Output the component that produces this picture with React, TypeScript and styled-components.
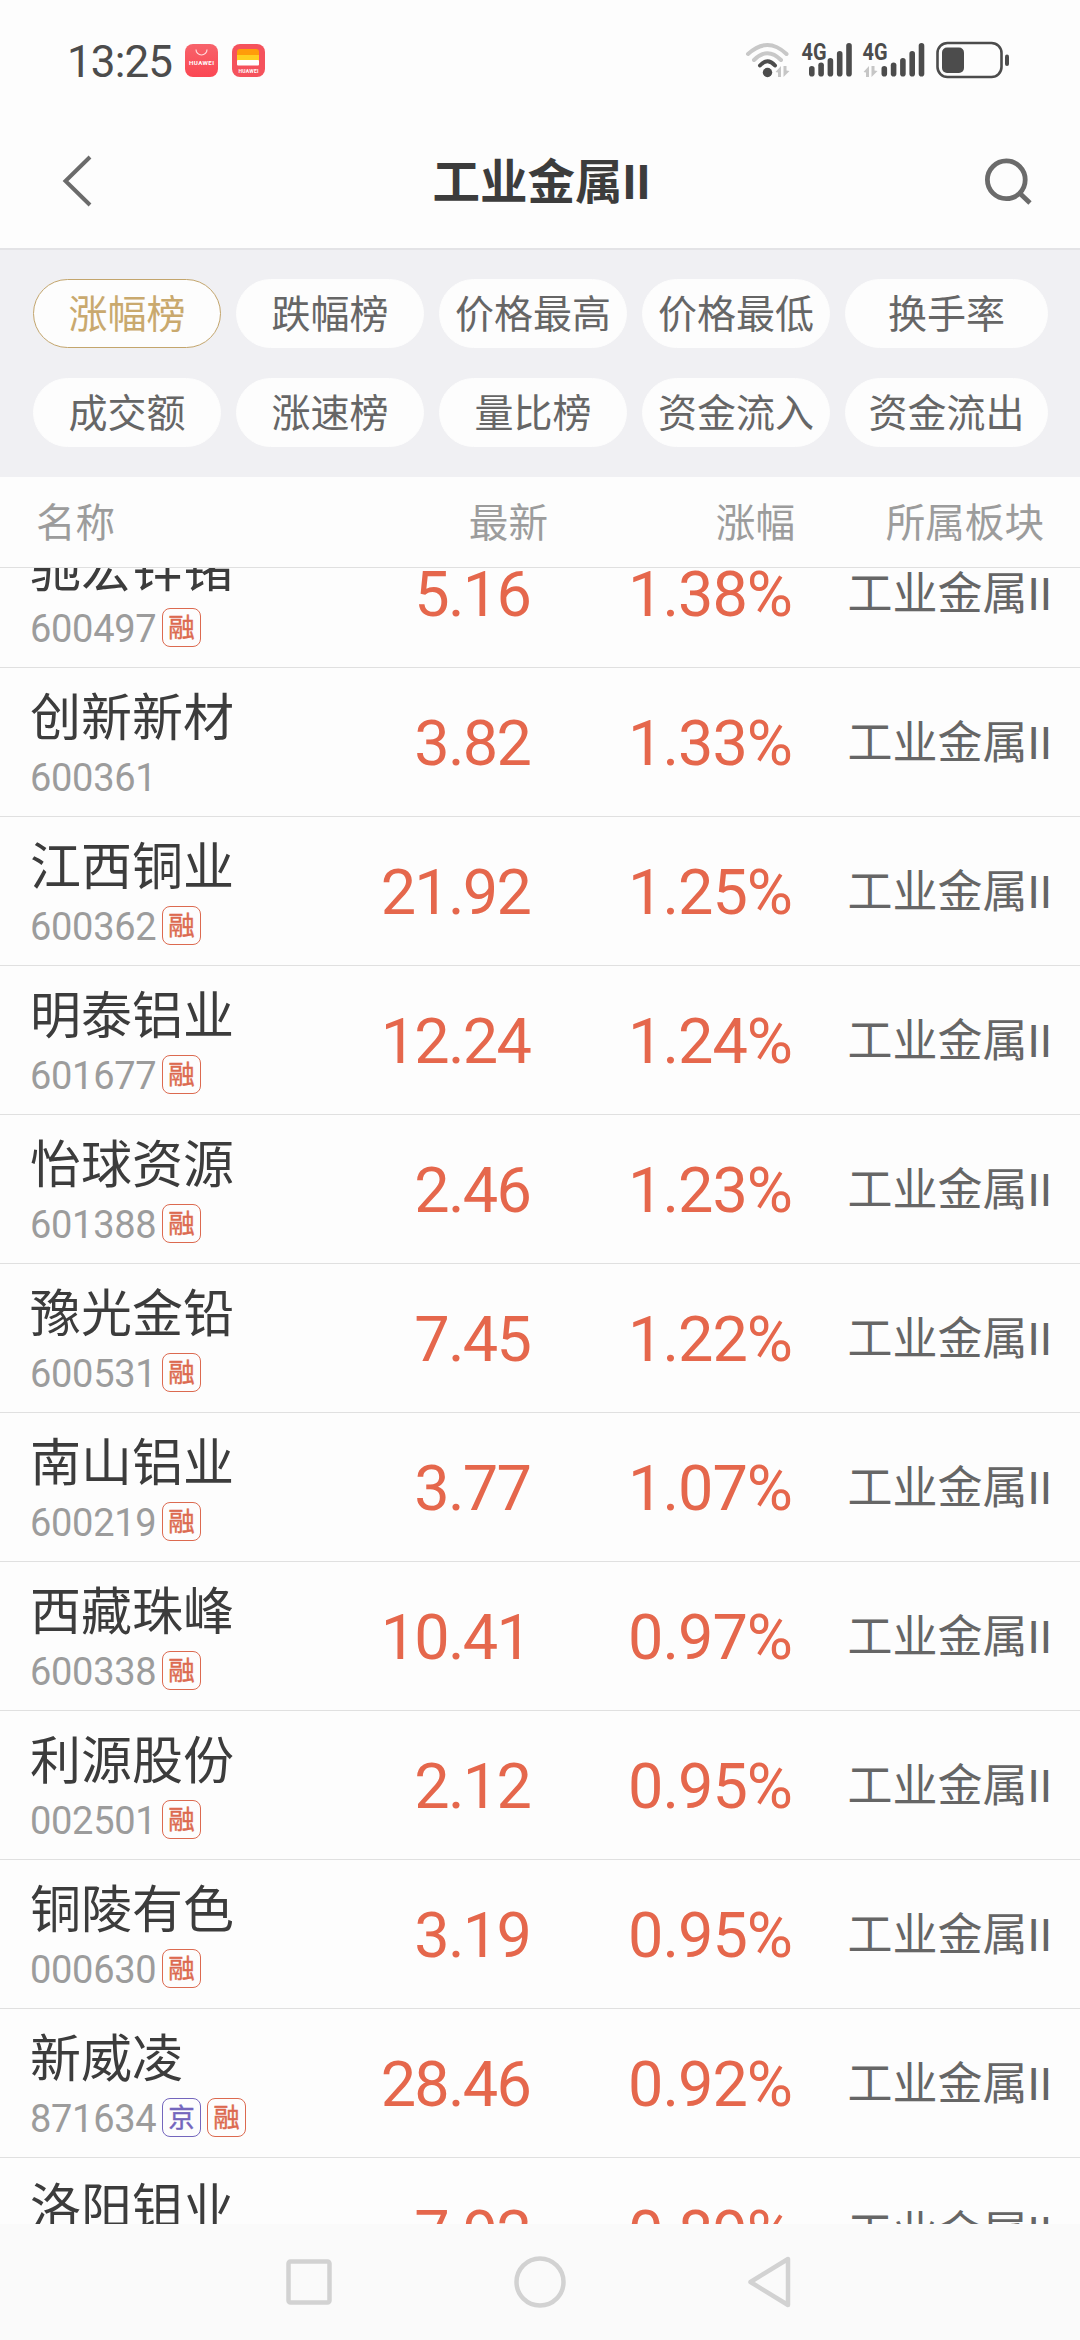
import React from "react";
import styled, { createGlobalStyle } from "styled-components";

const Global = createGlobalStyle`
  * { box-sizing: border-box; }
  html, body { margin: 0; background: #fdfdfd; }
  body { font-family: Roboto, "Noto Sans CJK SC", sans-serif; color: #3c3c3c; }
  svg { display: block; }
`;

const Screen = styled.div`
  width: 1080px;
  height: 2340px;
  display: flex;
  flex-direction: column;
  overflow: hidden;
  background: #fdfdfd;
`;

const StatusBar = styled.div`
  height: 120px;
  flex: none;
  display: flex;
  align-items: center;
  justify-content: space-between;
  padding: 0 70px 0 67px;
`;

const StatusGroup = styled.div<{ $gap: number }>`
  display: flex;
  align-items: center;
  gap: ${(p) => p.$gap}px;
`;

const Clock = styled.span`
  width: 105px;
  font-size: 44px;
  line-height: 52px;
  letter-spacing: -0.9px;
  color: #4c4c4c;
  padding-top: 3px;
`;

const Header = styled.header`
  height: 130px;
  flex: none;
  display: flex;
  align-items: center;
  justify-content: space-between;
  padding: 0 46px 6px 60px;
  border-bottom: 2px solid #e3e3e6;
`;

const Title = styled.h1`
  margin: 0;
  padding: 4px 0 0 3px;
  font-size: 47.5px;
  line-height: 60px;
  font-weight: 700;
`;

const Filters = styled.section`
  height: 227px;
  flex: none;
  display: grid;
  grid-template-columns: repeat(4, 188px) 203px;
  grid-template-rows: 69px 69px;
  column-gap: 15px;
  row-gap: 30px;
  padding: 29px 33px;
  background: #f0f0f3;
`;

const Pill = styled.button<{ $active?: boolean }>`
  display: flex;
  align-items: center;
  justify-content: center;
  padding: 2px 0 0;
  border: 1px solid ${(p) => (p.$active ? "#c3a56c" : "#fdfdfd")};
  border-radius: 35px;
  background: #fdfdfd;
  color: ${(p) => (p.$active ? "#c9a96e" : "#666")};
  font: inherit;
  font-size: 39px;
  line-height: 50px;
  white-space: nowrap;
`;

const columns = `
  display: grid;
  grid-template-columns: 270px 260px 262px 288px;
`;

const TableHead = styled.div`
  ${columns}
  height: 91px;
  flex: none;
  align-items: center;
  border-bottom: 1px solid #e0e0e0;
  font-size: 39.6px;
  line-height: 50px;
  color: #9c9c9c;
`;

const HeadCell = styled.div<{ $left?: number; $right?: number }>`
  text-align: ${(p) => (p.$left ? "left" : "right")};
  padding-left: ${(p) => p.$left ?? 0}px;
  padding-right: ${(p) => p.$right ?? 0}px;
  margin-right: ${(p) => (p.$right ? 0 : -18)}px;
  padding-top: 3px;
`;

const ChangeHead = styled(HeadCell)`
  margin-right: -3px;
`;

const List = styled.main`
  height: 1656px;
  flex: none;
  overflow: hidden;
`;

const Rows = styled.div`
  margin-top: -49px;
`;

const Row = styled.div`
  ${columns}
  height: 149px;
  align-items: center;
  border-bottom: 1px solid #e0e0e0;
`;

const Stock = styled.div`
  padding-left: 30px;
  white-space: nowrap;
`;

const Name = styled.div`
  font-size: 51px;
  line-height: 66px;
`;

const Meta = styled.div`
  display: flex;
  align-items: center;
  height: 40px;
  margin-top: 6px;
`;

const Code = styled.span`
  width: 132px;
  font-size: 38px;
  line-height: 40px;
  letter-spacing: -0.3px;
  color: #9c9c9c;
`;

const Badge = styled.span<{ $tone: string }>`
  width: 39px;
  height: 39px;
  margin-right: 6px;
  margin-top: -3px;
  display: flex;
  align-items: center;
  justify-content: center;
  border: 1.5px solid ${(p) => p.$tone};
  border-radius: 8px;
  color: ${(p) => p.$tone};
  font-size: 26.5px;
  line-height: 34px;
  -webkit-text-stroke: 0.4px ${(p) => p.$tone};
`;

const Value = styled.div<{ $spacing: number }>`
  padding-top: 4px;
  text-align: right;
  font-size: 63px;
  line-height: 74px;
  letter-spacing: ${(p) => p.$spacing}px;
  color: #e5674c;
`;

const Sector = styled.div`
  padding: 4px 28px 0 0;
  text-align: right;
  font-size: 45px;
  line-height: 60px;
  color: #666;
`;

const NavBar = styled.nav`
  flex: 1;
  display: flex;
  align-items: center;
  justify-content: space-between;
  padding: 0 286px;
  background: #fafafa;
`;

const GalleryIcon = () => (
  <svg width="35" height="35" viewBox="0 0 35 35">
    <defs>
      <linearGradient id="g" x1="0" y1="0" x2="0" y2="1">
        <stop offset="0" stopColor="#f7636b" />
        <stop offset="1" stopColor="#fb4753" />
      </linearGradient>
    </defs>
    <rect x="1" y="1" width="33" height="33" rx="8" fill="url(#g)" />
    <path d="M12 6.5a5.5 5.5 0 0 0 11 0" fill="none" stroke="#ffd9db" strokeWidth="1.2" />
    <text x="17.5" y="22" textAnchor="middle" fontSize="6.2" fontWeight="700" fill="#fff" textLength="25">HUAWEI</text>
  </svg>
);

const WalletIcon = () => (
  <svg width="35" height="35" viewBox="0 0 35 35">
    <rect x="1" y="1" width="33" height="33" rx="8" fill="#f5525c" />
    <path d="M6 13V9a3 3 0 0 1 3-3h16a3 3 0 0 1 3 3v4z" fill="#ff9d0a" />
    <rect x="6" y="12" width="22" height="6" fill="#ffcf1f" />
    <rect x="6" y="17" width="22" height="5.5" rx="1" fill="#fff" />
    <text x="17.5" y="30" textAnchor="middle" fontSize="5" fontWeight="700" fill="#fff" textLength="20">HUAWEI</text>
  </svg>
);

const Arrows = ({ x }: { x: number }) => (
  <path
    transform={`translate(${x} 24)`}
    d="M0 6L5.500 0V11H2.500V6.500ZM14 5L8 11V0H11V4.500Z"
    fill="#c6c6c6"
  />
);

const WifiIcon = () => (
  <svg width="46" height="36" viewBox="0 0 46 36" fill="none" strokeLinecap="round">
    <path d="M3 12Q22.500 -6 41.500 12" stroke="#c8c8c8" strokeWidth="4" />
    <path d="M9 18Q22.500 4.500 36 18" stroke="#c8c8c8" strokeWidth="4" />
    <path d="M15 23.500Q22.500 15 30 23.500" stroke="#4c4c4c" strokeWidth="4" />
    <circle cx="22.500" cy="30.500" r="4.700" fill="#4c4c4c" />
    <Arrows x={30.5} />
  </svg>
);

const SignalIcon = ({ data }: { data?: boolean }) => {
  const offset = data ? 11.5 : 0;
  const tops = [24, 20.5, 16, 9, 1];
  return (
    <svg width={data ? 62 : 50} height="36" viewBox={`0 0 ${data ? 62 : 50} 36`} overflow="visible">
      <text x="-0.5" y="17.500" fontSize="23" fontWeight="700" fill="#4c4c4c" textLength="25" lengthAdjust="spacingAndGlyphs">4G</text>
      {tops.map((top, i) => (
        <rect key={top} x={offset + 7 + i * 9.3} y={top} width="5.6" height={34.5 - top} rx="2.8" fill="#4c4c4c" />
      ))}
      {data && <Arrows x={0.5} />}
    </svg>
  );
};

const BatteryIcon = () => (
  <svg width="74" height="38" viewBox="0 0 74 38">
    <rect x="1.500" y="2" width="64" height="34" rx="10" fill="none" stroke="#4c4c4c" strokeWidth="2.600" />
    <rect x="6" y="6.500" width="22" height="25.500" rx="5" fill="#4c4c4c" />
    <rect x="69" y="13.500" width="4" height="11.500" rx="2" fill="#4c4c4c" />
  </svg>
);

const BackIcon = () => (
  <svg width="36" height="54" viewBox="0 0 36 54" fill="none" stroke="#6b6b6b" strokeWidth="4">
    <path d="M30 3L5.500 27L30 51" />
  </svg>
);

const SearchIcon = () => (
  <svg width="50" height="50" viewBox="0 0 50 50" fill="none" stroke="#6b6b6b" strokeWidth="4.800">
    <circle cx="22.300" cy="23.800" r="18.900" />
    <path d="M35.500 37L46 47" />
  </svg>
);

const navStroke = { fill: "none", stroke: "#d2d2d2", strokeWidth: 4.5, strokeLinejoin: "round" as const };

const RecentIcon = () => (
  <svg width="46" height="46" viewBox="0 0 46 46" {...navStroke}>
    <rect x="2.500" y="2.500" width="41" height="41" rx="2" />
  </svg>
);

const HomeIcon = () => (
  <svg width="52" height="52" viewBox="0 0 52 52" {...navStroke}>
    <circle cx="26" cy="26" r="23.500" />
  </svg>
);

const ReturnIcon = () => (
  <svg width="46" height="52" viewBox="0 0 46 52" {...navStroke}>
    <path d="M40 3V49L2.500 26Z" />
  </svg>
);

const filters = [
  "涨幅榜", "跌幅榜", "价格最高", "价格最低", "换手率",
  "成交额", "涨速榜", "量比榜", "资金流入", "资金流出",
];

const tones: Record<string, string> = { 融: "#dc6a50", 京: "#7466bd" };

const stocks: [string, string, string, string, string][] = [
  ["驰宏锌锗", "600497", "融", "5.16", "1.38%"],
  ["创新新材", "600361", "", "3.82", "1.33%"],
  ["江西铜业", "600362", "融", "21.92", "1.25%"],
  ["明泰铝业", "601677", "融", "12.24", "1.24%"],
  ["怡球资源", "601388", "融", "2.46", "1.23%"],
  ["豫光金铅", "600531", "融", "7.45", "1.22%"],
  ["南山铝业", "600219", "融", "3.77", "1.07%"],
  ["西藏珠峰", "600338", "融", "10.41", "0.97%"],
  ["利源股份", "002501", "融", "2.12", "0.95%"],
  ["铜陵有色", "000630", "融", "3.19", "0.95%"],
  ["新威凌", "871634", "京融", "28.46", "0.92%"],
  ["洛阳钼业", "603993", "融", "7.92", "0.89%"],
];

export default function App() {
  return (
    <Screen>
      <Global />
      <StatusBar>
        <StatusGroup $gap={12}>
          <Clock>13:25</Clock>
          <GalleryIcon />
          <WalletIcon />
        </StatusGroup>
        <StatusGroup $gap={11}>
          <WifiIcon />
          <SignalIcon />
          <SignalIcon data />
          <BatteryIcon />
        </StatusGroup>
      </StatusBar>
      <Header>
        <BackIcon />
        <Title>工业金属II</Title>
        <SearchIcon />
      </Header>
      <Filters>
        {filters.map((label, i) => (
          <Pill key={label} $active={i === 0}>{label}</Pill>
        ))}
      </Filters>
      <TableHead>
        <HeadCell $left={36}>名称</HeadCell>
        <HeadCell>最新</HeadCell>
        <ChangeHead>涨幅</ChangeHead>
        <HeadCell $right={36}>所属板块</HeadCell>
      </TableHead>
      <List>
        <Rows>
          {stocks.map(([name, code, badges, price, change]) => (
            <Row key={code}>
              <Stock>
                <Name>{name}</Name>
                <Meta>
                  <Code>{code}</Code>
                  {[...badges].map((b) => (
                    <Badge key={b} $tone={tones[b]}>{b}</Badge>
                  ))}
                </Meta>
              </Stock>
              <Value $spacing={-1.8}>{price}</Value>
              <Value $spacing={-1}>{change}</Value>
              <Sector>工业金属II</Sector>
            </Row>
          ))}
        </Rows>
      </List>
      <NavBar>
        <RecentIcon />
        <HomeIcon />
        <ReturnIcon />
      </NavBar>
    </Screen>
  );
}
